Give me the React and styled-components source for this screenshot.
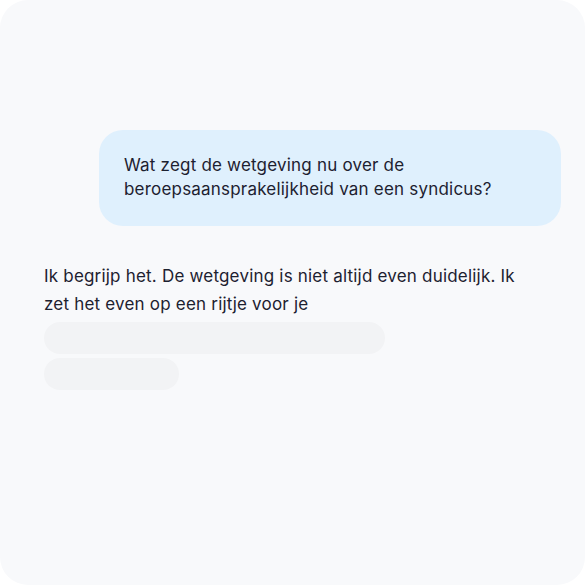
import React from "react";
import styled, { createGlobalStyle } from "styled-components";

const Global = createGlobalStyle`
  html, body { margin: 0; padding: 0; background: #ffffff; }
  body { font-family: Inter, "Noto Sans", sans-serif; }
`;

const Card = styled.div`
  box-sizing: border-box;
  width: 585px;
  height: 585px;
  background: #f8f9fb;
  border-radius: 28px;
  padding: 130px 24px 0 44px;
  display: flex;
  flex-direction: column;
`;

const UserBubble = styled.div`
  align-self: flex-end;
  box-sizing: border-box;
  width: 462px;
  background: #dff0fd;
  border-radius: 24px;
  padding: 23px 25px 25px 25px;
  font-size: 17px;
  line-height: 24px;
  letter-spacing: 0.2px;
  color: #1d2130;
`;

const Reply = styled.div`
  margin-top: 36px;
  font-size: 17px;
  line-height: 28px;
  letter-spacing: 0.2px;
  color: #1d2130;
  max-width: 490px;
`;

const Skeletons = styled.div`
  margin-top: 4px;
  display: flex;
  flex-direction: column;
  gap: 4px;
`;

const Bar = styled.div`
  width: ${(p) => p.$w}px;
  height: 32px;
  border-radius: 16px;
  background: #f2f3f5;
`;

export default function App() {
  return (
    <>
      <Global />
      <Card>
        <UserBubble>
          Wat zegt de wetgeving nu over de
          <br />
          beroepsaansprakelijkheid van een syndicus?
        </UserBubble>
        <Reply>
          Ik begrijp het. De wetgeving is niet altijd even duidelijk. Ik zet het
          even op een rijtje voor je
        </Reply>
        <Skeletons>
          <Bar $w={341} />
          <Bar $w={135} />
        </Skeletons>
      </Card>
    </>
  );
}
